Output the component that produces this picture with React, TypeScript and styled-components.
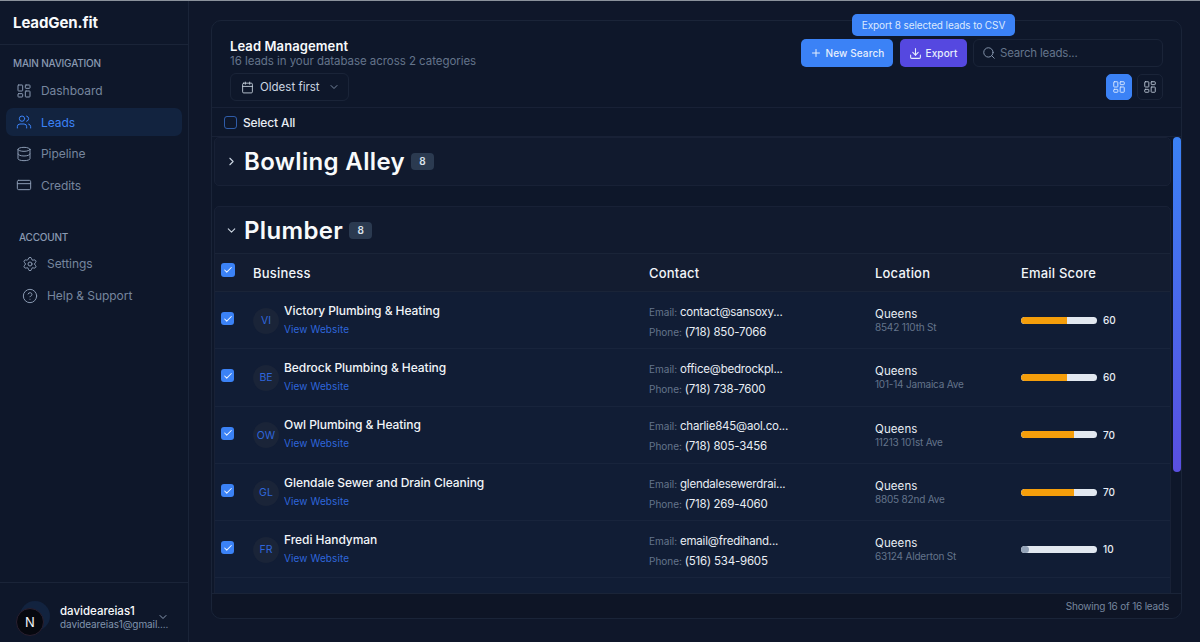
import styled, { createGlobalStyle } from "styled-components";
import {
  Calendar,
  Check,
  ChevronDown,
  ChevronRight,
  CircleHelp,
  CreditCard,
  Database,
  Download,
  LayoutDashboard,
  Plus,
  Search,
  Settings,
  Users,
} from "lucide-react";

const GlobalStyle = createGlobalStyle`
  * { box-sizing: border-box; }
  html, body { margin: 0; height: 100%; background: #0f172a; }
  body { font-family: Inter, "Liberation Sans", sans-serif; color: #f8fafc; overflow: hidden; }
  #root { height: 100%; }
`;

const Shell = styled.div`
  display: flex;
  height: 642px;
  border-top: 1px solid #8b929c;
  background: #0f172a;
`;

const Sidebar = styled.aside`
  width: 189px;
  flex-shrink: 0;
  display: flex;
  flex-direction: column;
  background: #0e172a;
  border-right: 1px solid #1a2438;
`;

const Logo = styled.div`
  height: 44px;
  padding: 12px 13px 0;
  font-size: 15px;
  font-weight: 700;
  letter-spacing: -0.1px;
  border-bottom: 1px solid #1a2438;
`;

const NavLabel = styled.div<{ $indent?: boolean }>`
  font-size: 10px;
  font-weight: 500;
  letter-spacing: -0.2px;
  color: #8a9ab2;
  line-height: 13px;
  padding-left: ${(p) => (p.$indent ? 13 : 7)}px;
  margin-bottom: ${(p) => (p.$indent ? 2 : 3)}px;
`;

const NavGroup = styled.nav<{ $top: number }>`
  display: flex;
  flex-direction: column;
  gap: 3.6px;
  padding: 0 6px;
  margin-top: ${(p) => p.$top}px;
`;

const NavItem = styled.div<{ $active?: boolean; $indent?: boolean }>`
  height: 28px;
  display: flex;
  align-items: center;
  gap: 9px;
  padding-left: ${(p) => (p.$indent ? 16 : 10)}px;
  border-radius: 7px;
  font-size: 12px;
  letter-spacing: -0.05px;
  color: ${(p) => (p.$active ? "#3b82f6" : "#76869e")};
  background: ${(p) => (p.$active ? "#12233f" : "transparent")};
  svg {
    color: ${(p) => (p.$active ? "#3b82f6" : "#8a9ab2")};
  }
`;

const Spacer = styled.div`
  flex: 1;
`;

const UserBar = styled.div`
  position: relative;
  height: 60px;
  flex-shrink: 0;
  display: flex;
  align-items: flex-start;
  border-top: 1px solid #1a2438;
  padding: 18px 0 0 20px;
  gap: 10px;
`;

const AvatarBack = styled.div`
  width: 30px;
  height: 30px;
  border-radius: 50%;
  background: #12233f;
  flex-shrink: 0;
`;

const DevBadge = styled.div`
  position: absolute;
  left: 16px;
  top: 25px;
  width: 28px;
  height: 28px;
  border-radius: 50%;
  background: #06080f;
  border: 1px solid #2a2030;
  color: #f2f4f7;
  display: flex;
  align-items: center;
  justify-content: center;
  font-size: 13px;
`;

const UserText = styled.div`
  padding-top: 3px;
  white-space: nowrap;
`;

const UserName = styled.div`
  font-size: 11.5px;
  font-weight: 500;
  line-height: 14px;
`;

const UserMail = styled.div`
  font-size: 10px;
  line-height: 12px;
  letter-spacing: -0.1px;
  color: #8094ad;
`;

const UserChevron = styled(ChevronDown)`
  position: absolute;
  left: 157px;
  top: 28px;
  color: #8a9ab2;
`;

const Main = styled.main`
  flex: 1;
  min-width: 0;
  padding: 19px 18px 23px 22px;
  display: flex;
`;

const Card = styled.section`
  position: relative;
  flex: 1;
  min-width: 0;
  display: flex;
  flex-direction: column;
  border: 1px solid #1a2438;
  border-radius: 10px;
  background: #0e172a;
`;

const Tooltip = styled.div`
  position: absolute;
  left: 640px;
  top: -7px;
  width: 163px;
  height: 22px;
  display: flex;
  align-items: center;
  justify-content: center;
  border-radius: 5px;
  background: #3b82f6;
  color: #dbe9fe;
  font-size: 10px;
  letter-spacing: -0.1px;
`;

const CardHeader = styled.header`
  height: 87px;
  flex-shrink: 0;
  display: flex;
  justify-content: space-between;
  padding: 17px 18px 0 18px;
  border-bottom: 1px solid #182136;
`;

const HeaderLeft = styled.div`
  display: flex;
  flex-direction: column;
`;

const Title = styled.h1`
  margin: 0;
  font-size: 13px;
  line-height: 16px;
  font-weight: 600;
  letter-spacing: 0.1px;
`;

const Subtitle = styled.p`
  margin: 0 0 5px;
  font-size: 11.5px;
  line-height: 14px;
  color: #64748b;
  letter-spacing: -0.05px;
`;

const SortButton = styled.button`
  width: 119px;
  height: 28px;
  display: flex;
  align-items: center;
  gap: 6px;
  padding: 0 10px;
  background: transparent;
  border: 1px solid #1a2438;
  border-radius: 6px;
  color: #cbd5e1;
  font: inherit;
  font-size: 11.5px;
  white-space: nowrap;
  svg {
    flex-shrink: 0;
  }
  svg:last-child {
    margin-left: 2px;
    color: #76869e;
  }
`;

const HeaderRight = styled.div`
  display: flex;
  flex-direction: column;
  align-items: flex-end;
  gap: 7px;
  padding-top: 1px;
`;

const Actions = styled.div`
  display: flex;
  gap: 6.5px;
`;

const ActionButton = styled.button<{ $bg: string; $width: number }>`
  width: ${(p) => p.$width}px;
  height: 28px;
  display: flex;
  align-items: center;
  justify-content: center;
  gap: 4px;
  background: ${(p) => p.$bg};
  border: 0;
  border-radius: 5px;
  color: #e6effd;
  font: inherit;
  font-size: 10px;
  font-weight: 500;
  letter-spacing: 0.1px;
`;

const SearchBox = styled.div`
  width: 190px;
  height: 28px;
  display: flex;
  align-items: center;
  gap: 4px;
  padding-left: 8px;
  border: 1px solid #1a2438;
  border-radius: 6px;
  font-size: 11.5px;
  letter-spacing: -0.2px;
  color: #64748b;
  svg {
    color: #8a9ab2;
  }
`;

const ViewToggles = styled.div`
  display: flex;
  gap: 5px;
`;

const ViewButton = styled.button<{ $active?: boolean }>`
  width: 26px;
  height: 26px;
  display: flex;
  align-items: center;
  justify-content: center;
  padding: 0;
  border-radius: 5px;
  border: 1px solid ${(p) => (p.$active ? "#3b82f6" : "#1a2438")};
  background: ${(p) => (p.$active ? "#3b82f6" : "transparent")};
  color: ${(p) => (p.$active ? "#dbe9fe" : "#b6c1d0")};
`;

const SelectBar = styled.div`
  height: 29px;
  flex-shrink: 0;
  display: flex;
  align-items: center;
  gap: 6px;
  padding-left: 12px;
  font-size: 12px;
  font-weight: 500;
  letter-spacing: -0.15px;
  color: #e8edf4;
  border-bottom: 1px solid #182136;
`;

const EmptyBox = styled.span`
  width: 13px;
  height: 13px;
  border: 1px solid #2f5ca8;
  border-radius: 3px;
`;

const CheckBox = styled.span<{ $large?: boolean }>`
  width: ${(p) => (p.$large ? 14 : 13)}px;
  height: ${(p) => (p.$large ? 14 : 13)}px;
  display: flex;
  align-items: center;
  justify-content: center;
  border-radius: 3px;
  background: #3b82f6;
  color: #eaf2ff;
`;

const ScrollArea = styled.div`
  position: relative;
  flex: 1;
  min-height: 0;
  overflow: hidden;
  padding: 0 10px 0 2px;
  display: flex;
  flex-direction: column;
  gap: 20px;
`;

const ScrollThumb = styled.div`
  position: absolute;
  right: 0;
  top: 0;
  width: 8px;
  height: 335px;
  border-radius: 4px;
  background: linear-gradient(180deg, #3b82f6, #5a4fe0);
`;

const Group = styled.div`
  border: 1px solid #182136;
  border-radius: 5px;
  background: #111a2e;
  flex-shrink: 0;
`;

const GroupHead = styled.div<{ $open?: boolean }>`
  height: ${(p) => (p.$open ? 46 : 47)}px;
  display: flex;
  align-items: center;
  padding: 0 0 ${(p) => (p.$open ? 0 : 1)}px 10px;
  gap: 6px;
  color: #cbd5e1;
`;

const GroupTitle = styled.h2`
  margin: 0;
  font-size: 24px;
  font-weight: 600;
  letter-spacing: 0.35px;
  color: #f8fafc;
`;

const CountBadge = styled.span`
  width: 23px;
  height: 17px;
  display: flex;
  align-items: center;
  justify-content: center;
  border-radius: 4px;
  background: #2b3a50;
  color: #dbe3ec;
  font-size: 10px;
  font-weight: 600;
`;

const Columns = "38px 396px 226px 146px 1fr";

const TableHead = styled.div`
  display: grid;
  grid-template-columns: ${Columns};
  align-items: center;
  height: 39px;
  background: #131c30;
  border-top: 1px solid #1a2438;
  border-bottom: 1px solid #1a2438;
  font-size: 13px;
  font-weight: 500;
  letter-spacing: 0.2px;
  color: #f1f5f9;
`;

const CheckCell = styled.div`
  padding-left: 6px;
  margin-top: -3px;
`;

const HeadCheckCell = styled.div`
  padding-left: 5.5px;
  margin-top: -5px;
`;

const Row = styled.div`
  display: grid;
  grid-template-columns: ${Columns};
  align-items: center;
  height: 57.3px;
  background: #111d35;
  border-bottom: 1px solid #18243c;
`;

const BusinessCell = styled.div`
  display: flex;
  align-items: center;
  gap: 5px;
`;

const Initials = styled.div`
  width: 26px;
  height: 26px;
  border-radius: 50%;
  background: #1a2438;
  color: #2f66db;
  font-size: 10.5px;
  display: flex;
  align-items: center;
  justify-content: center;
  margin-top: 1px;
`;

const BusinessInfo = styled.div`
  display: flex;
  flex-direction: column;
  gap: 4px;
  margin-top: -2px;
`;

const BusinessName = styled.div`
  font-size: 12px;
  line-height: 16px;
  font-weight: 500;
  letter-spacing: -0.05px;
  color: #f1f5f9;
`;

const SiteLink = styled.a`
  font-size: 10px;
  line-height: 13px;
  letter-spacing: 0.1px;
  color: #2f66db;
`;

const ContactCell = styled.div`
  display: flex;
  flex-direction: column;
  gap: 3px;
  margin-top: 4px;
`;

const ContactLine = styled.div`
  line-height: 17px;
  font-size: 11.5px;
  letter-spacing: -0.2px;
  color: #e8edf4;
  white-space: nowrap;
`;

const ContactKey = styled.span`
  font-size: 10px;
  letter-spacing: 0;
  color: #64748b;
`;

const LocationCity = styled.div`
  font-size: 11.5px;
  line-height: 14px;
  letter-spacing: 0.1px;
  color: #e8edf4;
`;

const LocationStreet = styled.div`
  font-size: 10px;
  line-height: 12px;
  letter-spacing: -0.2px;
  color: #64748b;
`;

const LocationCell = styled.div``;

const ScoreCell = styled.div`
  display: flex;
  align-items: center;
  gap: 6px;
  font-size: 10px;
  font-weight: 500;
  color: #e8edf4;
`;

const ScoreTrack = styled.div`
  width: 76px;
  height: 7px;
  border-radius: 4px;
  overflow: hidden;
  background: #e2e8f0;
`;

const ScoreFill = styled.div<{ $low: boolean }>`
  height: 100%;
  border-radius: ${(p) => (p.$low ? "4px" : "4px 0 0 4px")};
  background: ${(p) => (p.$low ? "#94a3b8" : "#f59e0b")};
`;

const EmptyRow = styled.div`
  height: 40px;
  background: #111d35;
`;

const Footer = styled.footer`
  height: 25px;
  flex-shrink: 0;
  display: flex;
  align-items: center;
  justify-content: flex-end;
  padding-right: 12px;
  border-top: 1px solid #1a2438;
  border-radius: 0 0 10px 10px;
  background: #0e1526;
  font-size: 10px;
  letter-spacing: -0.2px;
  color: #76869e;
`;

const leads = [
  { initials: "VI", name: "Victory Plumbing & Heating", email: "contact@sansoxy...", phone: "(718) 850-7066", street: "8542 110th St", score: 60 },
  { initials: "BE", name: "Bedrock Plumbing & Heating", email: "office@bedrockpl...", phone: "(718) 738-7600", street: "101-14 Jamaica Ave", score: 60 },
  { initials: "OW", name: "Owl Plumbing & Heating", email: "charlie845@aol.co...", phone: "(718) 805-3456", street: "11213 101st Ave", score: 70 },
  { initials: "GL", name: "Glendale Sewer and Drain Cleaning", email: "glendalesewerdrai...", phone: "(718) 269-4060", street: "8805 82nd Ave", score: 70 },
  { initials: "FR", name: "Fredi Handyman", email: "email@fredihand...", phone: "(516) 534-9605", street: "63124 Alderton St", score: 10 },
];

export default function App(): JSX.Element {
  return (
    <>
      <GlobalStyle />
      <Shell>
        <Sidebar>
          <Logo>LeadGen.fit</Logo>
          <NavGroup $top={12}>
            <NavLabel>MAIN NAVIGATION</NavLabel>
            <NavItem>
              <LayoutDashboard size={16} strokeWidth={1.5} />
              Dashboard
            </NavItem>
            <NavItem $active>
              <Users size={16} strokeWidth={1.5} />
              Leads
            </NavItem>
            <NavItem>
              <Database size={16} strokeWidth={1.5} />
              Pipeline
            </NavItem>
            <NavItem>
              <CreditCard size={16} strokeWidth={1.5} />
              Credits
            </NavItem>
          </NavGroup>
          <NavGroup $top={32}>
            <NavLabel $indent>ACCOUNT</NavLabel>
            <NavItem $indent>
              <Settings size={16} strokeWidth={1.5} />
              Settings
            </NavItem>
            <NavItem $indent>
              <CircleHelp size={16} strokeWidth={1.5} />
              Help &amp; Support
            </NavItem>
          </NavGroup>
          <Spacer />
          <UserBar>
            <AvatarBack />
            <UserText>
              <UserName>davideareias1</UserName>
              <UserMail>davideareias1@gmail....</UserMail>
            </UserText>
            <DevBadge>N</DevBadge>
            <UserChevron size={12} />
          </UserBar>
        </Sidebar>
        <Main>
          <Card>
            <Tooltip>Export 8 selected leads to CSV</Tooltip>
            <CardHeader>
              <HeaderLeft>
                <Title>Lead Management</Title>
                <Subtitle>16 leads in your database across 2 categories</Subtitle>
                <SortButton>
                  <Calendar size={13} strokeWidth={1.6} />
                  Oldest first
                  <ChevronDown size={12} />
                </SortButton>
              </HeaderLeft>
              <HeaderRight>
                <Actions>
                  <ActionButton $bg="#3b82f6" $width={92}>
                    <Plus size={12} />
                    New Search
                  </ActionButton>
                  <ActionButton $bg="#5548e0" $width={67}>
                    <Download size={13} />
                    Export
                  </ActionButton>
                  <SearchBox>
                    <Search size={14} strokeWidth={1.6} />
                    Search leads...
                  </SearchBox>
                </Actions>
                <ViewToggles>
                  <ViewButton $active>
                    <LayoutDashboard size={14} strokeWidth={1.6} />
                  </ViewButton>
                  <ViewButton>
                    <LayoutDashboard size={14} strokeWidth={1.6} />
                  </ViewButton>
                </ViewToggles>
              </HeaderRight>
            </CardHeader>
            <SelectBar>
              <EmptyBox />
              Select All
            </SelectBar>
            <ScrollArea>
              <ScrollThumb />
              <Group>
                <GroupHead>
                  <ChevronRight size={13} />
                  <GroupTitle>Bowling Alley</GroupTitle>
                  <CountBadge>8</CountBadge>
                </GroupHead>
              </Group>
              <Group>
                <GroupHead $open>
                  <ChevronDown size={13} />
                  <GroupTitle>Plumber</GroupTitle>
                  <CountBadge>8</CountBadge>
                </GroupHead>
                <TableHead>
                  <HeadCheckCell>
                    <CheckBox $large>
                      <Check size={10} strokeWidth={2.5} />
                    </CheckBox>
                  </HeadCheckCell>
                  <div>Business</div>
                  <div>Contact</div>
                  <div>Location</div>
                  <div>Email Score</div>
                </TableHead>
                {leads.map((lead) => (
                  <Row key={lead.initials}>
                    <CheckCell>
                      <CheckBox>
                        <Check size={10} strokeWidth={2.5} />
                      </CheckBox>
                    </CheckCell>
                    <BusinessCell>
                      <Initials>{lead.initials}</Initials>
                      <BusinessInfo>
                        <BusinessName>{lead.name}</BusinessName>
                        <SiteLink>View Website</SiteLink>
                      </BusinessInfo>
                    </BusinessCell>
                    <ContactCell>
                      <ContactLine>
                        <ContactKey>Email: </ContactKey>
                        {lead.email}
                      </ContactLine>
                      <ContactLine>
                        <ContactKey>Phone: </ContactKey>
                        {lead.phone}
                      </ContactLine>
                    </ContactCell>
                    <LocationCell>
                      <LocationCity>Queens</LocationCity>
                      <LocationStreet>{lead.street}</LocationStreet>
                    </LocationCell>
                    <ScoreCell>
                      <ScoreTrack>
                        <ScoreFill $low={lead.score < 30} style={{ width: `${lead.score}%` }} />
                      </ScoreTrack>
                      {lead.score}
                    </ScoreCell>
                  </Row>
                ))}
                <EmptyRow />
              </Group>
            </ScrollArea>
            <Footer>Showing 16 of 16 leads</Footer>
          </Card>
        </Main>
      </Shell>
    </>
  );
}
